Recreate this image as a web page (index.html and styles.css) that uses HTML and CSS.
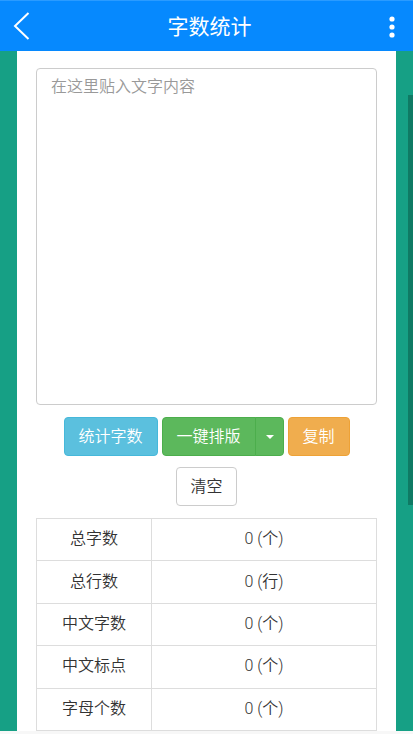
FILE: index.html
```html
<!DOCTYPE html>
<html lang="zh">
<head>
<meta charset="utf-8">
<title>字数统计</title>
<link rel="stylesheet" href="styles.css">
</head>
<body>
<header class="topbar">
  <svg class="back" width="18" height="28" viewBox="0 0 18 28"><polyline points="15.5,1 2,14 15.5,27" fill="none" stroke="#fff" stroke-width="2"/></svg>
  <h1 class="title">字数统计</h1>
  <svg class="more" width="8" height="24" viewBox="0 0 8 24"><circle cx="4" cy="4" r="2.6" fill="#fff"/><circle cx="4" cy="12" r="2.6" fill="#fff"/><circle cx="4" cy="20" r="2.6" fill="#fff"/></svg>
</header>
<main class="stage">
  <div class="scrollbar"></div>
  <section class="card">
    <textarea class="input" placeholder="在这里贴入文字内容"></textarea>
    <div class="actions">
      <button class="btn btn-info">统计字数</button>
      <div class="split">
        <button class="btn btn-success split-main">一键排版</button>
        <button class="btn btn-success split-caret"><span class="caret"></span></button>
      </div>
      <button class="btn btn-warning">复制</button>
    </div>
    <div class="actions2">
      <button class="btn btn-default">清空</button>
    </div>
    <table class="stats">
      <tr><td class="k">总字数</td><td class="v">0 (个)</td></tr>
      <tr><td class="k">总行数</td><td class="v">0 (行)</td></tr>
      <tr><td class="k">中文字数</td><td class="v">0 (个)</td></tr>
      <tr><td class="k">中文标点</td><td class="v">0 (个)</td></tr>
      <tr><td class="k">字母个数</td><td class="v">0 (个)</td></tr>
    </table>
  </section>
</main>
<div class="bottom"></div>
</body>
</html>
```
FILE: styles.css
```css
* { box-sizing: border-box; }
html, body { margin: 0; padding: 0; }
body {
  width: 413px;
  height: 734px;
  overflow: hidden;
  background: #fff;
  font-family: Roboto, "Noto Sans CJK SC", sans-serif;
  color: #333;
}
.topbar {
  height: 51px;
  background: #0689fe;
  border-top: 1px solid #2a9bff;
  display: flex;
  align-items: center;
  justify-content: space-between;
  padding: 0 17px 0 13px;
}
.back { display: block; }
.title {
  margin: 0;
  font-size: 21px;
  font-weight: 400;
  color: #fff;
  font-family: "Noto Sans CJK SC", sans-serif;
  line-height: 1;
  margin-top: -2px;
}
.more { display: block; margin-top: 1px; }
.stage {
  position: relative;
  height: 680px;
  background: #16a085;
  padding-left: 17px;
  overflow: hidden;
}
.scrollbar {
  position: absolute;
  right: 0;
  top: 44px;
  width: 5px;
  height: 410px;
  background: #0f7a64;
}
.card {
  width: 379px;
  min-height: 700px;
  background: #fff;
  padding: 17px 19px 0 19px;
}
.input {
  display: block;
  width: 341px;
  height: 337px;
  border: 1px solid #ccc;
  border-radius: 4px;
  padding: 4px 14px;
  font-family: "Noto Sans CJK SC", sans-serif;
  font-weight: 350;
  font-size: 16px;
  resize: none;
  outline: none;
}
.input::placeholder { color: #999; }
.actions {
  display: flex;
  justify-content: center;
  gap: 4px;
  margin-top: 12px;
}
.actions2 {
  display: flex;
  justify-content: center;
  margin-top: 11px;
}
.btn {
  height: 39px;
  border: 1px solid transparent;
  border-radius: 4px;
  font-family: "Noto Sans CJK SC", sans-serif;
  font-weight: 350;
  font-size: 16px;
  color: #fff;
  padding: 0 0 3px 0;
  line-height: 1;
}
.btn-info { background: #5bc0de; border-color: #46b8da; width: 94px; }
.btn-success { background: #5cb85c; border-color: #4cae4c; }
.btn-warning { background: #f0ad4e; border-color: #eea236; width: 62px; }
.btn-default { background: #fff; border-color: #ccc; color: #333; width: 61px; }
.split { display: flex; }
.split-main { width: 94px; border-radius: 4px 0 0 4px; }
.split-caret {
  width: 29px;
  border-radius: 0 4px 4px 0;
  border-left-color: #4cae4c;
  margin-left: -1px;
  display: flex;
  align-items: center;
  justify-content: center;
  padding: 0;
}
.caret {
  display: block;
  width: 0;
  height: 0;
  border-left: 4px solid transparent;
  border-right: 4px solid transparent;
  border-top: 4px solid #fff;
  margin-left: 1px;
}
.stats {
  margin-top: 12px;
  width: 341px;
  border-collapse: collapse;
  font-size: 16px;
}
.stats td {
  border: 1px solid #ddd;
  height: 42.4px;
  text-align: center;
  padding: 0 0 5px 0;
  font-family: Roboto, "Noto Sans CJK SC", sans-serif;
  font-weight: 350;
}
.stats .k { width: 115px; }
.bottom { height: 3px; background: #f7f7f7; }
```
